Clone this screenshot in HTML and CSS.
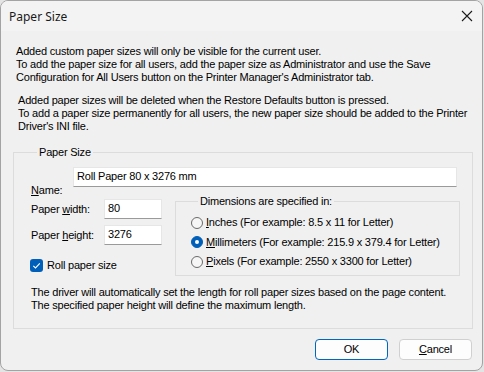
FILE: index.html
```html
<!DOCTYPE html>
<html>
<head>
<meta charset="utf-8">
<link rel="stylesheet" href="styles.css">
</head>
<body>
<div class="window">
  <div class="titlebar">
    <span class="title">Paper Size</span>
    <svg class="close" width="12" height="12" viewBox="0 0 12 12"><path d="M1 1 L11 11 M11 1 L1 11" stroke="#1b1b1b" stroke-width="1.1" fill="none"/></svg>
  </div>
  <div class="content">
    <div class="para p1">
      <div>Added custom paper sizes will only be visible for the current user.</div>
      <div>To add the paper size for all users, add the paper size as Administrator and use the Save</div>
      <div>Configuration for All Users button on the Printer Manager's Administrator tab.</div>
    </div>
    <div class="para p2">
      <div>Added paper sizes will be deleted when the Restore Defaults button is pressed.</div>
      <div>To add a paper size permanently for all users, the new paper size should be added to the Printer</div>
      <div>Driver's INI file.</div>
    </div>
    <fieldset class="group outer">
      <legend>Paper Size</legend>
      <div class="name-row">
        <label class="name-label"><u>N</u>ame:</label>
        <div class="input name-input">Roll Paper 80 x 3276 mm</div>
      </div>
      <div class="main">
        <div class="left">
          <div class="field-row">
            <label class="field-label">Paper <u>w</u>idth:</label>
            <div class="input small-input">80</div>
          </div>
          <div class="field-row">
            <label class="field-label">Paper <u>h</u>eight:</label>
            <div class="input small-input">3276</div>
          </div>
          <div class="check-row">
            <span class="checkbox"><svg width="13" height="13" viewBox="0 0 13 13"><path d="M3.3 6.8 L5.5 9 L9.8 4.4" stroke="#fff" stroke-width="1.1" fill="none"/></svg></span>
            <span>Roll paper size</span>
          </div>
        </div>
        <fieldset class="group dims">
          <legend>Dimensions are specified in:</legend>
          <div class="radio-row"><span class="radio"></span><span><u>I</u>nches (For example: 8.5 x 11 for Letter)</span></div>
          <div class="radio-row"><span class="radio on"></span><span><u>M</u>illimeters (For example: 215.9 x 379.4 for Letter)</span></div>
          <div class="radio-row"><span class="radio"></span><span><u>P</u>ixels (For example: 2550 x 3300 for Letter)</span></div>
        </fieldset>
      </div>
      <div class="note">
        <div>The driver will automatically set the length for roll paper sizes based on the page content.</div>
        <div>The specified paper height will define the maximum length.</div>
      </div>
    </fieldset>
    <div class="buttons">
      <div class="btn default">OK</div>
      <div class="btn"><u>C</u>ancel</div>
    </div>
  </div>
</div>
</body>
</html>
```
FILE: styles.css
```css
* { box-sizing: border-box; }
html, body { margin: 0; padding: 0; }
body {
  background: #e4e4e4;
  width: 484px;
  height: 372px;
  overflow: hidden;
  font-family: "Liberation Sans", Arial, sans-serif;
  font-size: 11px;
  line-height: 13px;
  letter-spacing: -0.2px;
  color: #000;
  white-space: nowrap;
}
u { text-decoration: underline; text-underline-offset: 1px; }
.window {
  width: 483px;
  height: 371px;
  background: #f0f0f0;
  border: 1px solid #a3a3a3;
  border-radius: 8px;
  overflow: hidden;
  display: flex;
  flex-direction: column;
}
.titlebar {
  height: 30px;
  flex: none;
  background: #f3f3f3;
  display: flex;
  align-items: center;
  justify-content: space-between;
  padding: 0 8px 0 8px;
}
.title {
  font-family: "Noto Sans", "Open Sans", sans-serif;
  font-size: 12px;
  letter-spacing: 0;
  color: #1a1a1a;
  margin-top: 1px;
}
.close { margin-right: 1px; }
.content {
  padding: 14px 0 0 0;
  display: flex;
  flex-direction: column;
}
.para { padding-left: 15px; }
.p2 { padding-left: 17px; margin-top: 10px; }
.group {
  border: 1px solid #dcdcdc;
  margin: 0;
  padding: 0;
  min-width: 0;
}
.group legend {
  padding: 0 2px;
  line-height: 13px;
}
.outer {
  margin: 13px 0 0 12px;
  width: 460px;
  height: 183px;
  padding: 0 0 0 17px;
}
.outer legend { margin-left: 6px; }
.name-row {
  display: flex;
  margin-top: 8px;
  height: 20px;
}
.name-label {
  width: 42px;
  align-self: flex-end;
  margin-bottom: -10px;
}
.input {
  background: #fff;
  border: 1px solid #e6e6e6;
  border-bottom-color: #9a9a9a;
  height: 20px;
  padding: 2px 0 0 3px;
}
.name-input { width: 384px; }
.main { display: flex; }
.left { width: 144px; padding-top: 12px; }
.field-row { display: flex; align-items: center; height: 20px; margin-bottom: 6px; }
.field-label { width: 73px; }
.small-input { width: 58px; }
.check-row { display: flex; align-items: center; margin-top: 14px; height: 13px; gap: 4px; margin-left: -1px; }
.checkbox {
  width: 13px; height: 13px;
  background: #005fb8;
  border-radius: 3px;
  display: inline-flex;
}
.dims {
  margin-top: 8px;
  width: 285px;
  height: 81px;
  padding: 5px 0 0 15px;
}
.dims legend { margin-left: 7px; }
.radio-row { display: flex; align-items: center; height: 19.5px; gap: 3px; }
.radio {
  width: 12px; height: 12px;
  border-radius: 50%;
  border: 1px solid #6a6a6a;
  background: #f6f6f6;
  display: inline-flex;
  align-items: center;
  justify-content: center;
}
.radio.on { background: #005fb8; border-color: #005fb8; }
.radio.on::after { content: ""; width: 4px; height: 4px; border-radius: 50%; background: #fff; }
.note { margin-top: 10px; }
.buttons {
  display: flex;
  justify-content: flex-end;
  gap: 11px;
  margin-top: 10px;
  padding-right: 10px;
}
.btn {
  width: 73px; height: 21px;
  border: 1px solid #d0d0d0;
  border-radius: 4px;
  background: #fdfdfd;
  display: flex;
  align-items: center;
  justify-content: center;
}
.btn.default { border-color: #0067c0; }
```
